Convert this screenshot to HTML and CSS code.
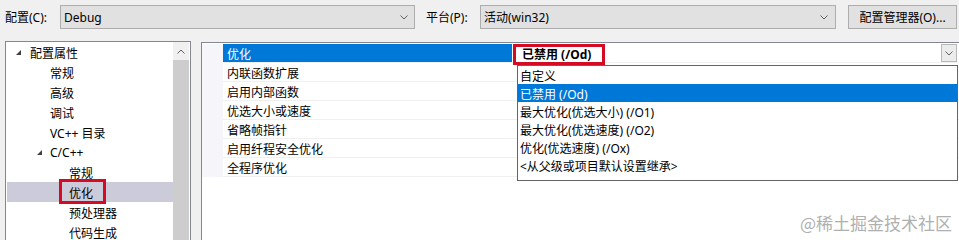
FILE: index.html
```html
<!DOCTYPE html>
<html lang="zh-CN">
  <head>
    <meta charset="UTF-8" />
    <title>属性页</title>
    <link rel="stylesheet" href="styles.css">
  </head>
  <body>
    <div class="toolbar">
      <span class="label">配置(C):</span>
      <div class="combo config">
        <span>Debug</span>
        <svg class="chev" width="8" height="5" viewBox="0 0 8 5"><polyline points="0.5,0.5 4,4 7.5,0.5" /></svg>
      </div>
      <span class="label platform-label">平台(P):</span>
      <div class="combo platform">
        <span>活动(win32)</span>
        <svg class="chev" width="8" height="5" viewBox="0 0 8 5"><polyline points="0.5,0.5 4,4 7.5,0.5" /></svg>
      </div>
      <button class="btn">配置管理器(O)...</button>
    </div>

    <div class="main">
      <!-- left tree -->
      <div class="tree">
        <div class="tree-list">
          <div class="node l1"><svg class="twist" width="5" height="5" viewBox="0 0 5 5"><polygon points="5,0 5,5 0,5" /></svg><span>配置属性</span></div>
          <div class="node l2">常规</div>
          <div class="node l2">高级</div>
          <div class="node l2">调试</div>
          <div class="node l2">VC++ 目录</div>
          <div class="node l2 open"><svg class="twist" width="5" height="5" viewBox="0 0 5 5"><polygon points="5,0 5,5 0,5" /></svg><span>C/C++</span></div>
          <div class="node l3">常规</div>
          <div class="node l3 selected"><span class="mark">优化</span></div>
          <div class="node l3">预处理器</div>
          <div class="node l3">代码生成</div>
        </div>
        <div class="scrollbar">
          <div class="scroll-up">
            <svg width="8" height="5" viewBox="0 0 8 5"><polyline points="0.5,4.5 4,1 7.5,4.5" /></svg>
          </div>
          <div class="thumb"></div>
        </div>
      </div>

      <!-- property grid -->
      <div class="props">
        <div class="row">
          <div class="gutter"></div>
          <div class="name active">优化</div>
          <div class="value">
            <span class="current">已禁用 (/Od)</span>
            <span class="drop-btn">
              <svg width="8" height="5" viewBox="0 0 8 5"><polyline points="0.5,0.5 4,4 7.5,0.5" /></svg>
            </span>
          </div>
        </div>
        <div class="row"><div class="gutter"></div><div class="name">内联函数扩展</div><div class="value"></div></div>
        <div class="row"><div class="gutter"></div><div class="name">启用内部函数</div><div class="value"></div></div>
        <div class="row"><div class="gutter"></div><div class="name">优选大小或速度</div><div class="value"></div></div>
        <div class="row"><div class="gutter"></div><div class="name">省略帧指针</div><div class="value"></div></div>
        <div class="row"><div class="gutter"></div><div class="name">启用纤程安全优化</div><div class="value"></div></div>
        <div class="row"><div class="gutter"></div><div class="name">全程序优化</div><div class="value"></div></div>

        <ul class="dropdown">
          <li>自定义</li>
          <li class="hot">已禁用 (/Od)</li>
          <li>最大优化(优选大小) (/O1)</li>
          <li>最大优化(优选速度) (/O2)</li>
          <li>优化(优选速度) (/Ox)</li>
          <li>&lt;从父级或项目默认设置继承&gt;</li>
        </ul>
      </div>
    </div>

    <div class="watermark">@稀土掘金技术社区</div>
  </body>
</html>
```

FILE: styles.css
```css
html,
body {
  margin: 0;
  height: 240px;
  overflow: hidden;
}
body {
  position: relative;
  width: 959px;
  background-color: #f0f0f0;
  font-family: "Noto Sans", "Noto Sans CJK SC", sans-serif;
  font-size: 12px;
  color: #000;
}

/* top row */
.toolbar {
  display: flex;
  align-items: center;
  padding: 5px 0 0 5px;
  height: 24px;
}
.label {
  width: 55px;
}
.platform-label {
  margin-left: 11px;
  width: 54px;
}
.combo {
  box-sizing: border-box;
  height: 24px;
  display: flex;
  align-items: center;
  justify-content: space-between;
  padding: 0 6px 0 3px;
  background-color: #e1e1e1;
  border: 1px solid #adadad;
}
.config {
  width: 355px;
}
.platform {
  width: 356px;
  padding-right: 7px;
}
.chev polyline,
.drop-btn polyline,
.scroll-up polyline {
  fill: none;
  stroke: #606060;
  stroke-width: 1;
}
.btn {
  box-sizing: border-box;
  margin-left: 12px;
  width: 109px;
  height: 24px;
  background-color: #e1e1e1;
  border: 1px solid #adadad;
  font-family: "Noto Sans", "Noto Sans CJK SC", sans-serif;
  font-size: 12px;
  color: #000;
  padding: 0;
}

.main {
  display: flex;
  align-items: flex-start;
  margin-top: 12px;
}

/* tree */
.tree {
  box-sizing: border-box;
  display: flex;
  margin-left: 5px;
  width: 186px;
  height: 210px;
  background-color: #fff;
  border: 1px solid #828790;
}
.tree-list {
  flex: 1;
}
.node {
  display: flex;
  align-items: center;
  height: 20px;
  padding-top: 1px;
  box-sizing: border-box;
  white-space: nowrap;
}
.twist polygon {
  fill: #404040;
}
.l1 {
  padding-left: 10px;
}
.l1 .twist {
  margin-right: 9px;
}
.l2 {
  padding-left: 44px;
}
.l2.open {
  padding-left: 31px;
}
.l2.open .twist {
  margin-right: 8px;
}
.l3 {
  padding-left: 63px;
}
.selected {
  margin-left: 1px;
  padding-left: 62px;
  padding-top: 2px;
  background-color: #cbcbd9;
}
.mark {
  position: relative;
}
.mark::after {
  content: "";
  position: absolute;
  left: -10px;
  right: -13px;
  top: -5px;
  bottom: -2px;
  border: 3px solid #d40b22;
}
.scrollbar {
  width: 16px;
  margin-right: 1px;
  display: flex;
  flex-direction: column;
  background-color: #f0f0f0;
}
.scroll-up {
  height: 18px;
  display: flex;
  align-items: center;
  justify-content: center;
}
.thumb {
  flex: 1;
  background-color: #cdcdcd;
}

/* property grid */
.props {
  position: relative;
  box-sizing: border-box;
  flex: 1;
  margin-left: 10px;
  margin-top: 1px;
  height: 210px;
  padding-top: 1px;
  background-color: #fff;
  border: 1px solid #828790;
  border-right: none;
}
.row {
  display: flex;
  height: 19px;
}
.gutter {
  width: 21px;
  background-color: #f6f6fa;
}
.name,
.value {
  box-sizing: border-box;
  height: 19px;
  line-height: 22px;
  border-bottom: 1px solid #f0f0f0;
}
.name {
  width: 289px;
  padding-left: 4px;
  white-space: nowrap;
}
.name.active {
  background-color: #0078d7;
  color: #fff;
}
.value {
  flex: 1;
  display: flex;
  justify-content: space-between;
  align-items: flex-start;
}
.current {
  position: relative;
  margin-left: 10px;
  height: 19px;
  line-height: 21px;
  font-weight: bold;
}
.current::after {
  content: "";
  position: absolute;
  left: -9px;
  right: -14px;
  top: 0;
  bottom: -2px;
  border: 3px solid #d40b22;
}
.drop-btn {
  box-sizing: border-box;
  width: 16px;
  height: 18px;
  margin-right: 2px;
  display: flex;
  align-items: center;
  justify-content: center;
  background-color: #ececec;
  border: 1px solid #b8b8b8;
}
.dropdown {
  position: absolute;
  left: 315px;
  top: 22px;
  box-sizing: border-box;
  width: 441px;
  height: 116px;
  margin: 0;
  padding: 0;
  list-style: none;
  background-color: #fff;
  border: 1px solid #646464;
}
.dropdown li {
  height: 18px;
  line-height: 21px;
  padding-left: 2px;
  white-space: nowrap;
}
.dropdown li.hot {
  background-color: #0078d7;
  color: #fff;
}

.watermark {
  position: absolute;
  right: 7px;
  top: 212px;
  font-family: "Noto Sans CJK SC", sans-serif;
  font-size: 17px;
  line-height: 22px;
  color: #b0b0b0;
}
```
